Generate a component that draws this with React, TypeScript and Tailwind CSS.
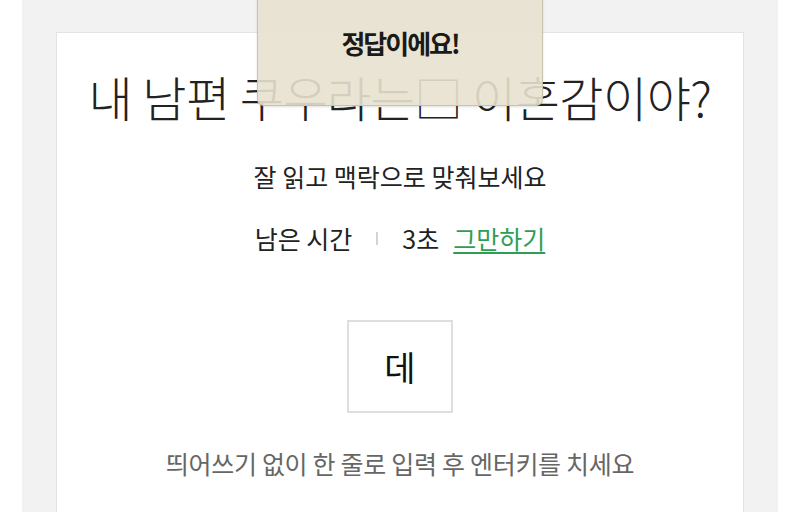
import { useState } from "react";

const font = { fontFamily: '"Noto Sans CJK KR", "Noto Sans", sans-serif' };

const App = () => {
  const [answer, setAnswer] = useState("데");

  return (
    <div className="relative h-[512px] w-full overflow-hidden bg-white" style={font}>
      <div className="mx-[22px] h-full bg-[#f2f2f2] px-[34px] pt-[32px]">
        <div className="flex h-[600px] flex-col items-center border border-[#e3e3e3] bg-white">
          <h1 className="mt-[35px] text-[48px] font-light leading-[56px] tracking-[-0.5px] text-[#222]">
            내 남편 쿠우라는□ 이혼감이야?
          </h1>
          <p className="mt-[37px] text-[25px] leading-[30px] text-[#222]">잘 읽고 맥락으로 맞춰보세요</p>
          <div className="mt-[32px] flex items-center text-[25px] leading-[30px] text-[#222]">
            <span>남은 시간</span>
            <span className="mx-[24px] h-[13px] w-[2px] bg-[#d4d4d4]" />
            <span>3초</span>
            <a href="#" className="ml-[14px] text-[#2f9e55] underline decoration-2 underline-offset-[3px]">
              그만하기
            </a>
          </div>
          <input
            value={answer}
            onChange={e => setAnswer(e.target.value)}
            className="mt-[67px] h-[93px] w-[106px] border-2 border-[#dedede] bg-white text-center text-[34px] text-[#111] outline-none"
          />
          <p className="mt-[35px] text-[25px] leading-[30px] tracking-[-0.3px] text-[#666]">
            띄어쓰기 없이 한 줄로 입력 후 엔터키를 치세요
          </p>
        </div>
      </div>

      <div className="absolute left-[257px] top-0 flex h-[106px] w-[286px] items-start justify-center rounded-b-[7px] border border-t-0 border-[#c9c2ad] bg-[#e7e1ce]/90 pt-[27px] shadow-sm">
        <span className="text-[26px] font-bold leading-[32px] tracking-[-2px] text-[#1a1a1a]">정답이에요!</span>
      </div>
    </div>
  );
};

export default App;
